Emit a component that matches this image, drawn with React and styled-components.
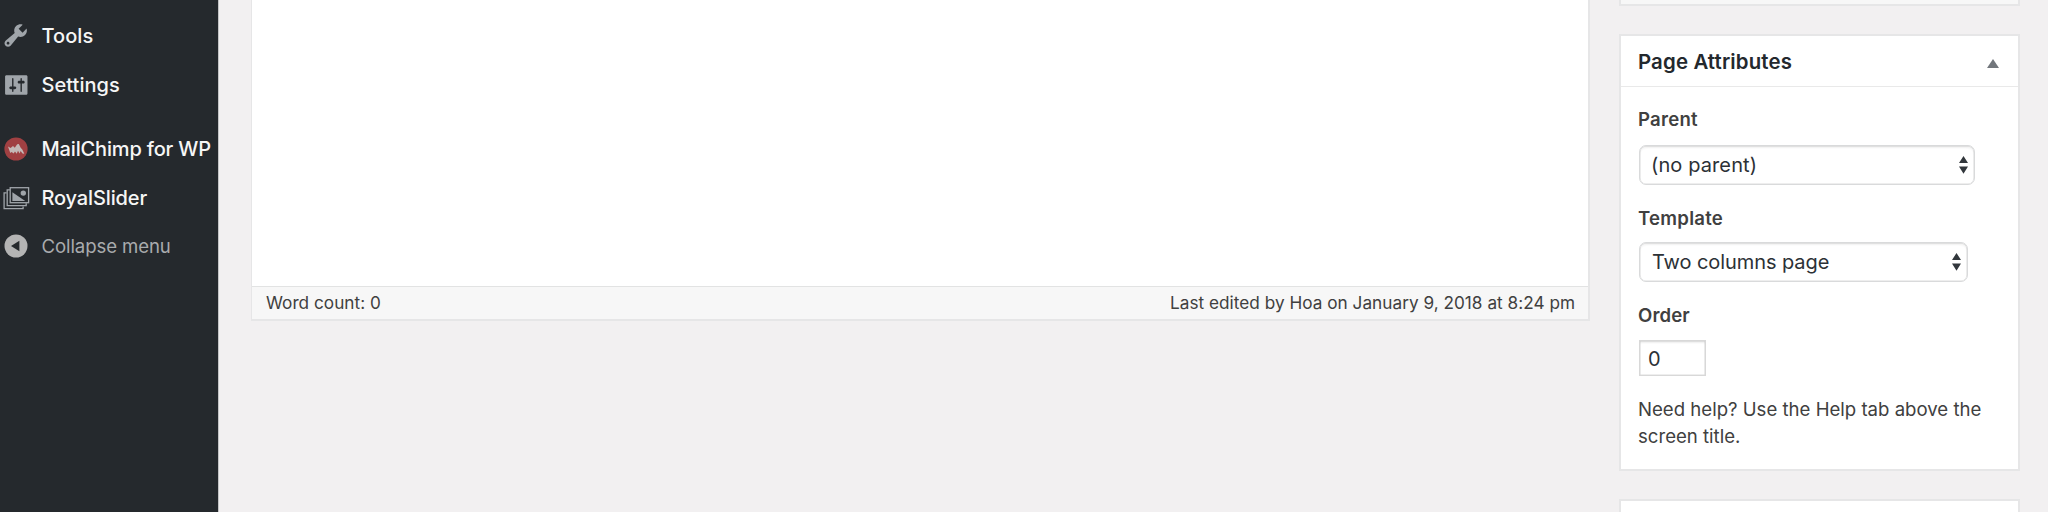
import React from 'react';
import styled, { createGlobalStyle } from 'styled-components';

const GlobalStyle = createGlobalStyle`
  *, *::before, *::after { box-sizing: border-box; }
  body {
    margin: 0;
    background: #f2f0f1;
    color: #404040;
    font-family: Inter, "Liberation Sans", sans-serif;
  }
`;

const Page = styled.div`
  display: flex;
  height: 512px;
  overflow: hidden;
  background: #f2f0f1;
`;

const Sidebar = styled.nav`
  display: flex;
  flex-direction: column;
  flex: none;
  width: 218px;
  padding-top: 11.75px;
  background: #25292d;
  box-shadow: 1px 0 0 #c4c4c6;
`;

const MenuGroup = styled.ul`
  margin: 0 0 16px;
  padding: 0;
  list-style: none;
`;

const MenuItem = styled.li`
  display: flex;
  align-items: center;
  height: 48.5px;
  padding-left: 1.5px;
  color: ${(p) => (p.$muted ? '#a9abad' : '#f6f6f6')};
  font-size: ${(p) => (p.$muted ? '18.6px' : '20px')};
  font-weight: ${(p) => (p.$muted ? 400 : 500)};
  letter-spacing: ${(p) => p.$track || 0}px;
  white-space: nowrap;

  svg {
    flex: none;
    width: 28px;
    height: 28px;
    margin-right: 12px;
    overflow: visible;
  }
`;

const Content = styled.main`
  display: flex;
  flex: 1;
  align-items: flex-start;
  padding: 0 28px 0 33px;
`;

const Editor = styled.section`
  display: flex;
  flex-direction: column;
  width: 1339px;
  height: 321px;
  margin-right: 29px;
  border: 2px solid #e6e6e7;
  border-width: 0 2px 2px 1px;
  background: #fff;
`;

const StatusBar = styled.footer`
  display: flex;
  justify-content: space-between;
  align-items: center;
  height: 33px;
  margin-top: auto;
  padding: 0 13px 1px 14px;
  border-top: 1px solid #e2e3e3;
  background: #f7f7f7;
  color: #404040;
  font-size: 17.2px;
  letter-spacing: 0.02px;
`;

const SideColumn = styled.aside`
  display: flex;
  flex-direction: column;
  gap: 28px;
  width: 401px;
`;

const Panel = styled.section`
  border: 2px solid #e6e6e7;
  background: #fff;
`;

const PanelEnd = styled(Panel)`
  height: 6px;
  border-top: 0;
  background: #f7f7f7;
`;

const PanelStart = styled(Panel)`
  height: 40px;
`;

const PanelHeader = styled.header`
  display: flex;
  justify-content: space-between;
  align-items: center;
  height: 51px;
  padding: 1px 19px 0 17px;
  border-bottom: 1px solid #e9e9e9;
`;

const PanelTitle = styled.h2`
  margin: 0;
  color: #23282d;
  font-size: 20.4px;
  font-weight: 600;
  letter-spacing: 0.15px;
`;

const ToggleIcon = styled.svg`
  width: 12px;
  height: 9px;
  margin-top: 4px;
  fill: #72777c;
`;

const PanelBody = styled.div`
  display: flex;
  flex-direction: column;
  align-items: flex-start;
  height: 382px;
  padding: 19px 17px 0;
`;

const FieldLabel = styled.label`
  height: 26px;
  margin-bottom: ${(p) => p.$gap}px;
  color: #404040;
  font-size: 18.6px;
  font-weight: 600;
  line-height: 26px;
  letter-spacing: ${(p) => p.$track}px;
`;

const Select = styled.div`
  display: flex;
  justify-content: space-between;
  align-items: center;
  width: ${(p) => p.$width}px;
  height: 40px;
  margin: 0 0 20px 1px;
  padding: 0 6px 0 ${(p) => p.$indent}px;
  border: 1px solid #d9dadb;
  border-radius: 7px;
  background: #fff;
  box-shadow: inset 0 2px 2px rgba(0, 0, 0, 0.06), inset 0 0 0 0.5px #dedede;
  color: #2c3136;
  font-size: 20px;
  letter-spacing: ${(p) => p.$track}px;
`;

const Arrows = styled.svg`
  width: 9px;
  height: 18px;
  fill: #32373c;
`;

const OrderInput = styled.input`
  width: 67px;
  height: 36px;
  margin: 0 0 20px 1px;
  padding: 2px 0 0 8px;
  border: 1px solid #d8d8d8;
  border-radius: 0;
  outline: none;
  box-shadow: inset 0 2px 2px rgba(0, 0, 0, 0.07), inset 0 0 0 0.5px #dedede;
  background: #fff;
  color: #2c3136;
  font: 20px Inter, "Liberation Sans", sans-serif;
`;

const HelpText = styled.p`
  margin: 0;
  color: #404040;
  font-size: 18.6px;
  line-height: 27.3px;
`;

const ToolsIcon = () => (
  <svg viewBox="0.2 0.4 20 20" fill="#a0a5aa">
    <path d="M16.68 9.77c-1.34 1.34-3.3 1.67-4.95.99l-5.41 6.52c-.99.99-2.59.99-3.58 0s-.99-2.59 0-3.57l6.52-5.42c-.68-1.65-.35-3.61.99-4.95 1.28-1.28 3.12-1.62 4.72-1.06l-2.89 2.89 2.82 2.82 2.86-2.87c.53 1.58.18 3.39-1.08 4.65zM3.81 16.21c.4.39 1.04.39 1.43 0 .4-.4.4-1.04 0-1.43-.39-.4-1.03-.4-1.43 0-.39.39-.39 1.03 0 1.43z" />
  </svg>
);

const SettingsIcon = () => (
  <svg viewBox="-0.2 0 20 20" fill="#a0a5aa">
    <path d="M18 16V4c0-.55-.45-1-1-1H3c-.55 0-1 .45-1 1v12c0 .55.45 1 1 1h14c.55 0 1-.45 1-1zM8 11h1c.55 0 1 .45 1 1s-.45 1-1 1H8v1.5c0 .28-.22.5-.5.5s-.5-.22-.5-.5V13H6c-.55 0-1-.45-1-1s.45-1 1-1h1V5.5c0-.28.22-.5.5-.5s.5.22.5.5V11zm5-2h-1c-.55 0-1-.45-1-1s.45-1 1-1h1V5.5c0-.28.22-.5.5-.5s.5.22.5.5V7h1c.55 0 1 .45 1 1s-.45 1-1 1h-1v5.5c0 .28-.22.5-.5.5s-.5-.22-.5-.5V9z" />
  </svg>
);

const MailChimpIcon = () => (
  <svg viewBox="0 0 28 28">
    <circle cx="14" cy="14" r="11.6" fill="#a04042" />
    <path
      d="M6 11.6l2.6 1.4 2.4-2 1.8 1.7 2.4-3.4 1.6-.2 1.9 3.6 1.6 1.7 2 4.4-1.8-.2-1.9-2.7-1 2.6-1.6-2.8-1.3 3-1.7-2.2-1.4 2-1.9-1.6-1.4 1z"
      fill="#c4b9b7"
    />
  </svg>
);

const SliderIcon = () => (
  <svg viewBox="0 0 28 28" fill="none" stroke="#a0a5aa" strokeWidth="1.3">
    <path d="M4.6 8.9H2.1v15.8h19v-2.3" />
    <path d="M7.9 5.9H5.2v15.8h19v-2.4" />
    <rect x="8.2" y="3.7" width="18.4" height="15" />
    <path d="M10.4 8.3v8.6h12.8z" fill="#a0a5aa" stroke="none" />
    <circle cx="21.3" cy="9.1" r="2.7" fill="#a0a5aa" stroke="none" />
  </svg>
);

const CollapseIcon = () => (
  <svg viewBox="0 0 28 28">
    <circle cx="14" cy="14" r="11.5" fill="#b4b4b4" />
    <path d="M9 14l8.4-5.3v10.6z" fill="#25292d" />
  </svg>
);

const SelectArrows = () => (
  <Arrows viewBox="0 0 9 18">
    <path d="M0 7L4.5 0 9 7zM0 10.6h9L4.5 17.8z" />
  </Arrows>
);

export default function App() {
  return (
    <Page>
      <GlobalStyle />
      <Sidebar>
        <MenuGroup>
          <MenuItem $track={0.05}><ToolsIcon />Tools</MenuItem>
          <MenuItem $track={0.05}><SettingsIcon />Settings</MenuItem>
        </MenuGroup>
        <MenuGroup>
          <MenuItem $track={-0.16}><MailChimpIcon />MailChimp for WP</MenuItem>
          <MenuItem $track={-0.13}><SliderIcon />RoyalSlider</MenuItem>
          <MenuItem $muted $track={-0.1}><CollapseIcon />Collapse menu</MenuItem>
        </MenuGroup>
      </Sidebar>
      <Content>
        <Editor>
          <StatusBar>
            <span>Word count: 0</span>
            <span>Last edited by Hoa on January 9, 2018 at 8:24 pm</span>
          </StatusBar>
        </Editor>
        <SideColumn>
          <PanelEnd />
          <Panel>
            <PanelHeader>
              <PanelTitle>Page Attributes</PanelTitle>
              <ToggleIcon viewBox="0 0 12 9"><path d="M0 9L6 0l6 9z" /></ToggleIcon>
            </PanelHeader>
            <PanelBody>
              <FieldLabel $gap={13} $track={0.23}>Parent</FieldLabel>
              <Select $width={336} $indent={11} $track={0.11}>(no parent)<SelectArrows /></Select>
              <FieldLabel $gap={11} $track={0.25}>Template</FieldLabel>
              <Select $width={329} $indent={12} $track={-0.08}>Two columns page<SelectArrows /></Select>
              <FieldLabel $gap={12} $track={0.1} htmlFor="order">Order</FieldLabel>
              <OrderInput id="order" defaultValue="0" />
              <HelpText>Need help? Use the Help tab above the screen title.</HelpText>
            </PanelBody>
          </Panel>
          <PanelStart />
        </SideColumn>
      </Content>
    </Page>
  );
}
